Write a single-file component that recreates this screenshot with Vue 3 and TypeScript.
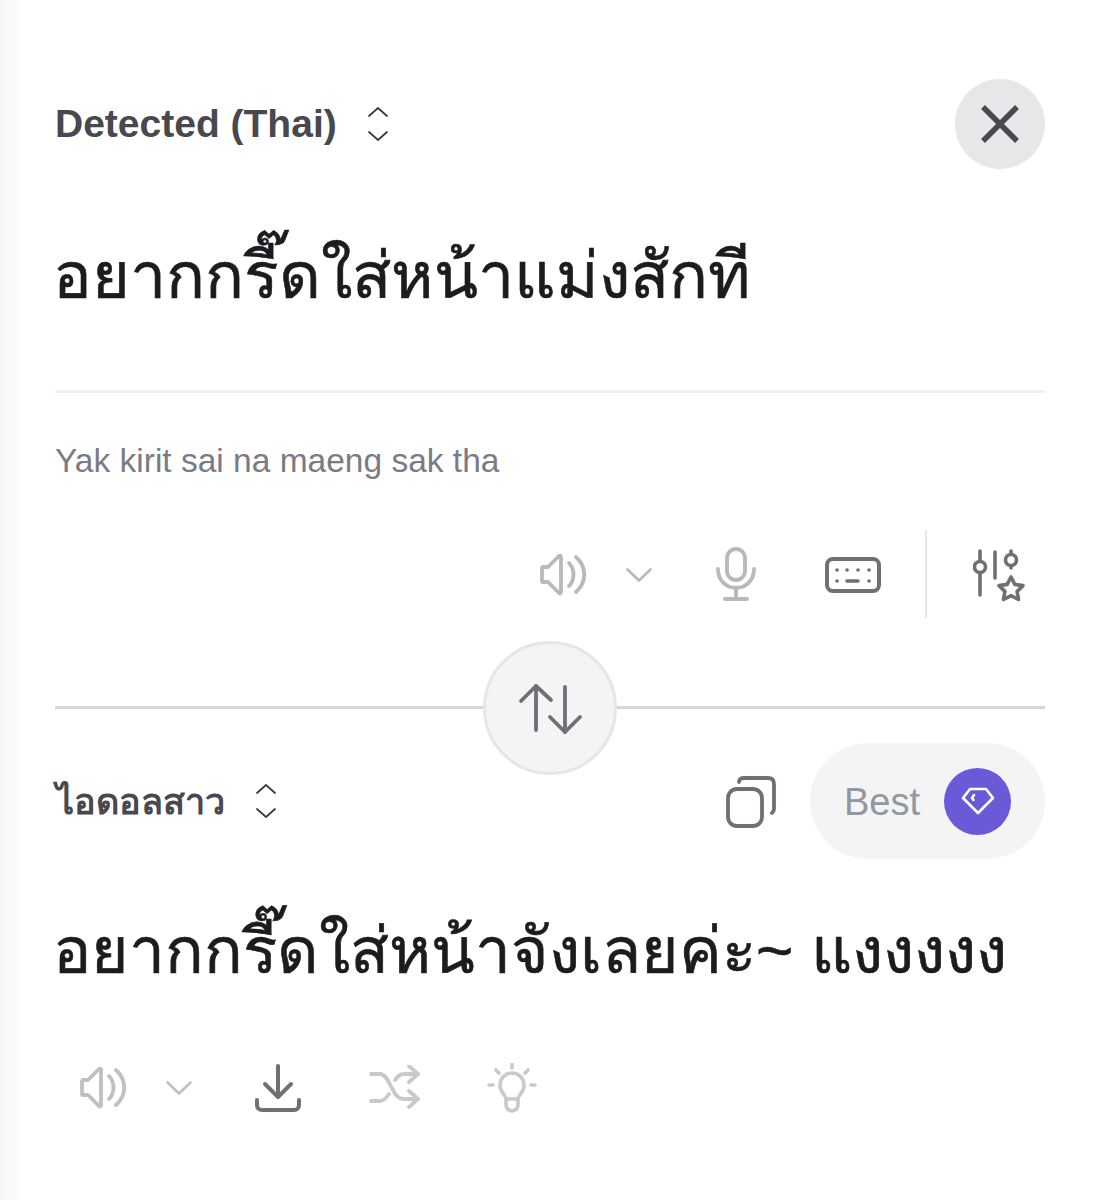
<script setup lang="ts">
const sourceText = 'อยากกรี๊ดใส่หน้าแม่งสักที'
const targetText = 'อยากกรี๊ดใส่หน้าจังเลยค่ะ~ แงงงงง'
</script>

<template>
  <div class="page">
    <section class="source">
      <div class="head">
        <div class="lang">
          <span class="lang-name">Detected (Thai)</span>
          <svg class="updown" width="22" height="36" viewBox="0 0 22 36" fill="none" stroke="#3c3c43" stroke-width="1.8" stroke-linecap="round" stroke-linejoin="round">
            <path d="M2 10 11 2l9 8" />
            <path d="M2 26l9 8 9-8" />
          </svg>
        </div>
        <button class="close">
          <svg width="40" height="40" viewBox="0 0 40 40" fill="none" stroke="#48484e" stroke-width="5.5">
            <path d="M3 3l34 34M37 3 3 37" />
          </svg>
        </button>
      </div>
      <div class="main-text source-text">{{ sourceText }}</div>
      <div class="roman">Yak kirit sai na maeng sak tha</div>
      <div class="tools top-tools">
        <svg class="i-speaker" width="48" height="42" viewBox="0 0 48 42" fill="none" stroke="#b9b9bd" stroke-width="3.800" stroke-linecap="round" stroke-linejoin="round">
          <path d="M2 14v13a1 1 0 0 0 1 1h5l11 11c1 1 2 .5 2-1V3c0-1.500-1-2-2-1L8 13H3a1 1 0 0 0-1 1z" />
          <path d="M29 9c6 6 6 17 0 23" />
          <path d="M36 3c11 10 11 25 0 35" />
        </svg>
        <svg class="i-chev" width="26" height="14" viewBox="0 0 26 14" fill="none" stroke="#b9b9bd" stroke-width="2.600" stroke-linecap="round" stroke-linejoin="round">
          <path d="M1.500 1.500 13 12.500 24.500 1.500" />
        </svg>
        <svg class="i-mic" width="40" height="54" viewBox="0 0 40 54" fill="none" stroke="#b9b9bd" stroke-width="3.800" stroke-linecap="round">
          <rect x="11" y="2" width="18" height="31" rx="9" />
          <path d="M2 22c0 25 36 25 36 0" />
          <path d="M20 41v11M9 52h22" />
        </svg>
        <svg class="i-key" width="56" height="36" viewBox="0 0 56 36" fill="none" stroke="#6f6f76" stroke-width="4">
          <rect x="2" y="2" width="52" height="32" rx="6" />
          <g stroke-width="3.600" stroke-linecap="round">
            <path d="M12 13h.1M22 13h.1M33 13h.1M44 13h.1M12 24h.1M44 24h.1" />
            <path d="M22 24h11" />
          </g>
        </svg>
        <div class="vbar"></div>
        <svg class="i-sliders" width="52" height="55" viewBox="0 -3 52 55" fill="none" stroke="#6f6f76" stroke-width="3.600" stroke-linecap="round" stroke-linejoin="round">
          <path d="M7 1v10M7 23v22" />
          <circle cx="7" cy="17" r="5.500" />
          <path d="M22 2v26" />
          <path d="M38 1v3M38 16v2" />
          <circle cx="38" cy="10" r="5.500" />
          <path d="M38 27l3.800 7.400 8.200 1.200-5.900 5.800 1.400 8.100-7.500-3.900-7.500 3.900 1.400-8.100-5.900-5.800 8.200-1.200z" />
        </svg>
      </div>
    </section>

    <div class="swap-line">
      <button class="swap">
        <svg width="64" height="52" viewBox="0 0 64 52" fill="none" stroke="#6f6f76" stroke-width="3.800" stroke-linecap="round" stroke-linejoin="round">
          <path d="M18 4v44" />
          <path d="M3 19 18 4l15 14" />
          <path d="M47 5v45" />
          <path d="M32 35l15 15 15-15" />
        </svg>
      </button>
    </div>

    <section class="target">
      <div class="head target-head">
        <div class="lang">
          <span class="lang-name thai">ไอดอลสาว</span>
          <svg class="updown" width="22" height="36" viewBox="0 0 22 36" fill="none" stroke="#3c3c43" stroke-width="1.8" stroke-linecap="round" stroke-linejoin="round">
            <path d="M2 10 11 2l9 8" />
            <path d="M2 26l9 8 9-8" />
          </svg>
        </div>
        <div class="right">
          <svg class="copy" width="52" height="52" viewBox="0 0 52 52" fill="none" stroke="#6f6f76" stroke-width="3.800" stroke-linecap="round">
            <rect x="2" y="13" width="34" height="37" rx="9" />
            <path d="M13 6c0-3 2-4 5-4h24c4 0 6 2 6 6v25c0 2-1 3-2 4" />
          </svg>
          <div class="best">
            <span class="best-label">Best</span>
            <span class="gem">
              <svg width="34" height="30" viewBox="0 0 34 30" fill="none" stroke="#fff" stroke-width="2.600" stroke-linecap="round" stroke-linejoin="round">
                <path d="M9 3h16l7 9-15 15L2 12z" />
                <path d="M13 9l-2 3 1.500 2" />
              </svg>
            </span>
          </div>
        </div>
      </div>
      <div class="main-text target-text">{{ targetText }}</div>
      <div class="tools bottom-tools">
        <svg class="i-speaker" width="48" height="42" viewBox="0 0 48 42" fill="none" stroke="#c0c0c4" stroke-width="3.800" stroke-linecap="round" stroke-linejoin="round">
          <path d="M2 14v13a1 1 0 0 0 1 1h5l11 11c1 1 2 .5 2-1V3c0-1.500-1-2-2-1L8 13H3a1 1 0 0 0-1 1z" />
          <path d="M29 9c6 6 6 17 0 23" />
          <path d="M36 3c11 10 11 25 0 35" />
        </svg>
        <svg class="i-chev" width="26" height="14" viewBox="0 0 26 14" fill="none" stroke="#c0c0c4" stroke-width="2.600" stroke-linecap="round" stroke-linejoin="round">
          <path d="M1.500 1.500 13 12.500 24.500 1.500" />
        </svg>
        <svg class="i-down" width="46" height="48" viewBox="0 0 46 48" fill="none" stroke="#6f6f76" stroke-width="4" stroke-linecap="round" stroke-linejoin="round">
          <path d="M23 2v30M10 20l13 13 13-13" />
          <path d="M2 36v5c0 3 2 5 5 5h32c3 0 5-2 5-5v-5" />
        </svg>
        <svg class="i-shuffle" width="52" height="46" viewBox="0 0 52 46" fill="none" stroke="#c9c9cc" stroke-width="3.800" stroke-linecap="round" stroke-linejoin="round">
          <path d="M2 9h9c10 0 12 25 23 25h15" />
          <path d="M2 36h9c4 0 7-4 9-7M26 15c2-3 4-6 9-6h14" />
          <path d="M40 1l9 8-9 8M40 26l9 8-9 8" />
        </svg>
        <svg class="i-bulb" width="50" height="50" viewBox="0 0 50 50" fill="none" stroke="#c9c9cc" stroke-width="3.600" stroke-linecap="round" stroke-linejoin="round">
          <path d="M25 1v4M9 7l3 3M41 7l-3 3M2 22h4M44 22h4" />
          <path d="M19 36c0-4-6-6-6-14a12 12 0 0 1 24 0c0 8-6 10-6 14z" />
          <path d="M19 37v5c0 3 3 6 6 6s6-3 6-6v-5" />
        </svg>
      </div>
    </section>
  </div>
</template>

<style>
html,
body {
  margin: 0;
  background: #fff;
}
</style>

<style scoped>
.page {
  width: 1100px;
  height: 1200px;
  box-sizing: border-box;
  padding: 79px 55px 0;
  overflow: hidden;
  background: linear-gradient(90deg, #f6f6f6 0, #fff 24px);
  font-family: "Liberation Sans", "Noto Sans", sans-serif;
}

.head {
  display: flex;
  align-items: center;
  justify-content: space-between;
  height: 90px;
}

.lang {
  display: flex;
  align-items: center;
  gap: 30px;
}

.lang-name {
  font-size: 39px;
  font-weight: 700;
  color: #48484e;
}

.lang-name.thai {
  font-size: 36px;
  margin-left: 1px;
}

.close {
  width: 90px;
  height: 90px;
  border: 0;
  padding: 0;
  border-radius: 50%;
  background: #e7e7e9;
  display: flex;
  align-items: center;
  justify-content: center;
}

.main-text {
  color: #1c1c20;
  font-size: 64px;
  line-height: 90px;
  white-space: nowrap;
  -webkit-text-stroke: 0.6px #1c1c20;
  text-indent: -2px;
}

.source-text {
  margin-top: 62px;
  height: 162px;
  box-sizing: border-box;
  border-bottom: 3px solid #f1f1f2;
  font-size: 64.5px;
}

.roman {
  margin-top: 48px;
  font-size: 33.500px;
  line-height: 40px;
  color: #7b7b85;
}

.tools {
  display: flex;
  align-items: center;
  justify-content: flex-end;
  height: 90px;
  margin-top: 48px;
  gap: 0;
}

.top-tools {
  padding-right: 20px;
}

.top-tools .i-speaker,
.top-tools .i-chev,
.top-tools .i-key {
  margin-top: 2px;
}

.tools .i-chev {
  margin-left: 38px;
}

.tools .i-mic {
  margin-left: 64px;
}

.tools .i-key {
  margin-left: 69px;
}

.vbar {
  width: 2px;
  height: 88px;
  background: #e6e6e8;
  margin-left: 44px;
  margin-right: 46px;
}

.swap-line {
  margin-top: 87px;
  height: 3px;
  background: #d6d6d8;
  display: flex;
  align-items: center;
  justify-content: center;
}

.swap {
  flex: none;
  width: 134px;
  height: 134px;
  box-sizing: border-box;
  border: 3px solid #e6e6e8;
  border-radius: 50%;
  background: #f4f4f5;
  padding: 0;
  display: flex;
  align-items: center;
  justify-content: center;
}

.target-head {
  margin-top: 33px;
  height: 118px;
}

.right {
  display: flex;
  align-items: center;
  gap: 32px;
}

.copy {
  margin-top: 2px;
}

.best {
  width: 235px;
  height: 116px;
  box-sizing: border-box;
  padding: 0 34px;
  border-radius: 58px;
  background: #f4f4f5;
  display: flex;
  align-items: center;
  justify-content: space-between;
  color: #9198a1;
  font-size: 38px;
}

.best-label {
  padding-top: 2px;
}

.gem {
  width: 67px;
  height: 67px;
  border-radius: 50%;
  background: #6a5ad8;
  display: flex;
  align-items: center;
  justify-content: center;
}

.target-text {
  margin-top: 46px;
}

.bottom-tools {
  justify-content: flex-start;
  margin-top: 47px;
  padding-left: 25px;
}

.bottom-tools .i-down {
  margin-left: 63px;
}

.bottom-tools .i-shuffle {
  margin-left: 68px;
}

.bottom-tools .i-bulb {
  margin-left: 66px;
}
</style>
